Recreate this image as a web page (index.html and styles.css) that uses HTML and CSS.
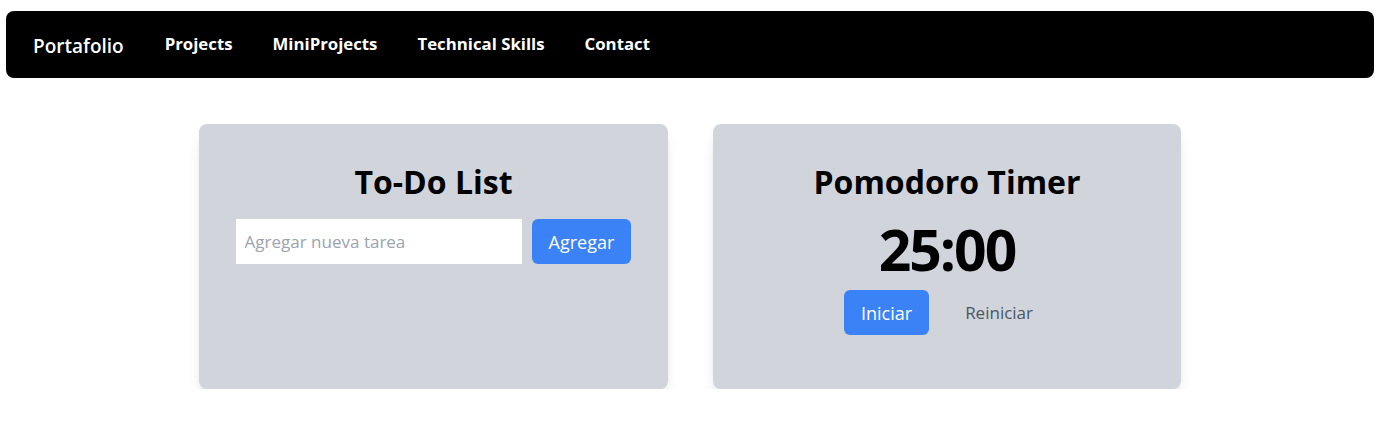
FILE: index.html
```html
<!DOCTYPE html>
<html lang="es">
<head>
<meta charset="utf-8">
<title>Portafolio</title>
<link rel="stylesheet" href="styles.css">
</head>
<body>
<nav class="navbar">
  <a class="brand" href="#">Portafolio</a>
  <a class="nav-link" href="#">Projects</a>
  <a class="nav-link" href="#">MiniProjects</a>
  <a class="nav-link" href="#">Technical Skills</a>
  <a class="nav-link" href="#">Contact</a>
</nav>
<main class="cards">
  <section class="card">
    <h2 class="card-title">To-Do List</h2>
    <div class="todo-row">
      <input class="todo-input" type="text" placeholder="Agregar nueva tarea">
      <button class="btn btn-primary">Agregar</button>
    </div>
  </section>
  <section class="card">
    <h2 class="card-title">Pomodoro Timer</h2>
    <div class="timer">25:00</div>
    <div class="timer-actions">
      <button class="btn btn-primary">Iniciar</button>
      <button class="btn btn-ghost">Reiniciar</button>
    </div>
  </section>
</main>
</body>
</html>
```
FILE: styles.css
```css
* { box-sizing: border-box; }
body {
  margin: 0;
  background: #ffffff;
  font-family: "Open Sans", "Noto Sans", sans-serif;
  color: #000;
}
.navbar {
  margin: 11px 4px 0 6px;
  height: 67px;
  background: #000;
  border-radius: 8px;
  display: flex;
  align-items: center;
  padding-left: 27px;
  gap: 40px;
}
.navbar a { color: #fff; text-decoration: none; }
.brand {
  font-size: 19px;
  font-weight: 600;
  margin-top: 3px;
  margin-right: 1px;
}
.nav-link {
  font-size: 16.8px;
  font-weight: 700;
  margin-bottom: 3px;
}
.cards {
  display: flex;
  justify-content: center;
  gap: 45px;
  margin-top: 46px;
  padding-left: 2px;
}
.card {
  width: 469px;
  background: #d1d5db;
  border-radius: 8px;
  box-shadow: 0 10px 15px -3px rgba(0,0,0,0.1), 0 4px 6px -4px rgba(0,0,0,0.1);
  padding: 40px 0 54px;
  display: flex;
  flex-direction: column;
  align-items: center;
}
.card + .card { width: 468px; }
.card-title {
  margin: 0 0 19px;
  font-size: 32px;
  line-height: 36px;
  font-weight: 700;
}
.todo-row {
  display: flex;
  gap: 10px;
}
.todo-input {
  width: 286px;
  height: 45px;
  border: none;
  outline: none;
  padding: 0 9px;
  font-family: inherit;
  font-size: 17px;
  background: #fff;
}
.todo-input::placeholder { color: #9ca3af; }
.btn {
  height: 45px;
  padding: 0 17px;
  border: none;
  border-radius: 6px;
  font-family: inherit;
  font-size: 18px;
  cursor: pointer;
}
.btn-primary { background: #3b82f6; color: #fff; }
.btn-ghost { background: transparent; color: #4b5563; font-size: 17px; }
.timer {
  font-size: 57px;
  line-height: 60px;
  font-weight: 700;
  letter-spacing: -2px;
  margin-bottom: 11px;
}
.timer-actions {
  display: flex;
  gap: 19px;
}
```
